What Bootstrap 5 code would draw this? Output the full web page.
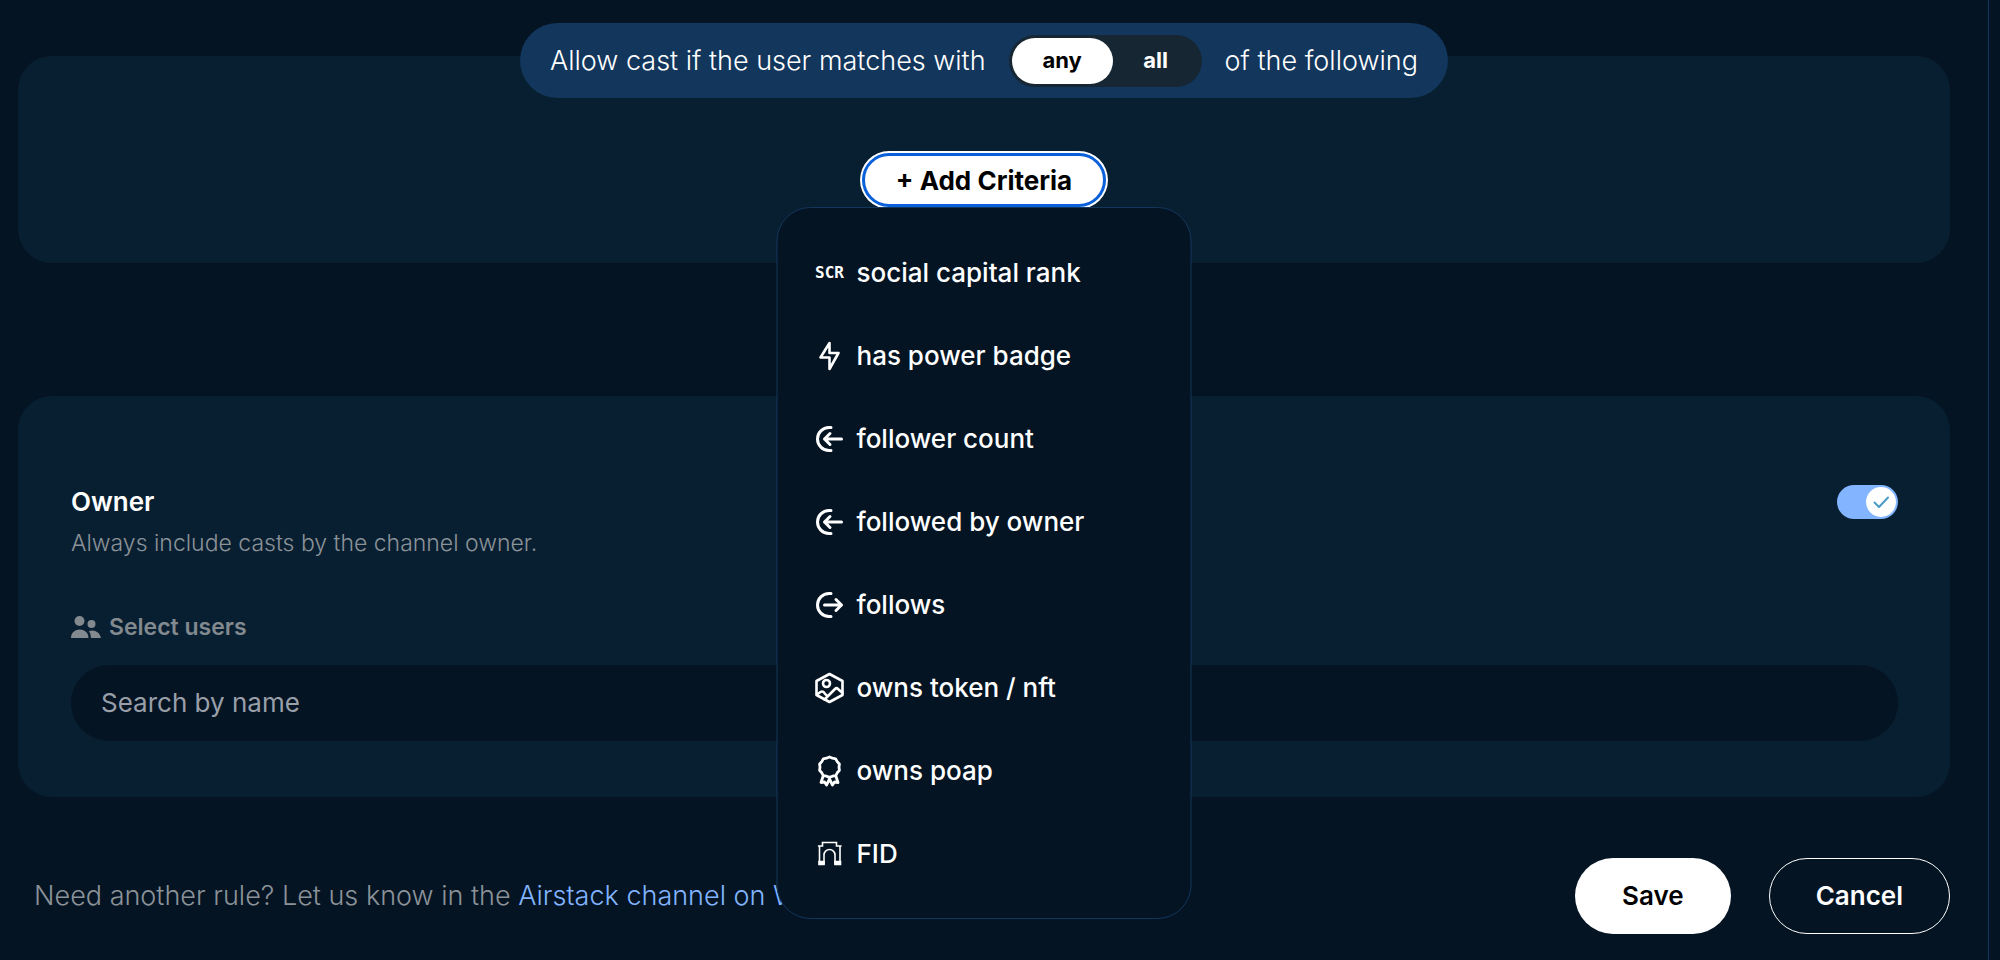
<!DOCTYPE html>
<html lang="en">
<head>
<meta charset="utf-8">
<meta name="viewport" content="width=device-width, initial-scale=1">
<title>Channel rules</title>
<link href="https://cdn.jsdelivr.net/npm/bootstrap@5.3.0/dist/css/bootstrap.min.css" rel="stylesheet">
<style>
  :root { --ink: #041423; --panel: #081f31; --edge: #12365c; --sky: #82b4ff; --muted: #8b9298; }
  body { background: var(--ink); color: #fff; font-family: Inter, "Liberation Sans", sans-serif; font-size: 27px; font-weight: 300; line-height: 36px; min-height: 100vh; }
  .page-frame { min-height: 100vh; margin-right: 11px; padding: 23px 38px 0 18px; border-right: 1px solid var(--edge); }
  .match-bar { position: relative; z-index: 1; height: 75px; padding: 0 30px; gap: 23px; margin-bottom: -42px; background: var(--edge); }
  .segments { height: 52px; padding: 3px; background: #162632; }
  .segments label { height: 46px; width: 101px; line-height: 44px; text-align: center; font-size: 22px; font-weight: 700; border-radius: 23px; cursor: pointer; }
  .segments label:last-child { width: 86px; }
  .segments .btn-check:checked + label { background: #fff; color: #000; }
  .rule-panel { background: var(--panel); border-radius: 34px; }
  .criteria-panel { height: 207px; padding-top: 97px; margin-bottom: 133px; }
  .add-btn { height: 54px; padding: 2px 31px 0; background: #fff; color: #000; border: 3px solid #0a60d8; border-radius: 27px; box-shadow: 0 0 0 2px #fff; font-size: 26px; font-weight: 700; line-height: 36px; }
  .criteria-menu { top: 100%; left: 50%; transform: translateX(-50%); width: 415px; padding: 23px 0; background: var(--ink); border: 1px solid var(--edge); border-radius: 34px; --bs-dropdown-font-size: 26px; }
  .criteria-menu .dropdown-item { height: 83px; padding: 0 37px; gap: 12px; color: #fff; font-size: 26px; font-weight: 500; background: none; }
  .criteria-menu svg { width: 30px; height: 32px; flex: none; }
  .criteria-menu svg, .stroke-icon { fill: none; stroke: currentColor; stroke-width: 3; stroke-linecap: round; stroke-linejoin: round; }
  .scr-mark { width: 30px; font: 700 16px/32px "DejaVu Sans Mono", monospace; text-align: center; }
  .owner-panel { height: 401px; padding: 88px 52px 0 53px; }
  .owner-panel h2 { font-size: 26px; line-height: 36px; font-weight: 600; margin: 0 0 5px; }
  .owner-panel p { font-size: 23px; line-height: 36px; color: var(--muted); margin: 0 0 48px; }
  .toggle-switch { appearance: none; width: 61px; height: 34px; margin: 1px 0 0; border-radius: 17px; background: #27394a; cursor: pointer; }
  .toggle-switch:checked { background: var(--sky); }
  .toggle-knob { right: 2px; top: 3px; width: 30px; height: 30px; background: #fff; border-radius: 50%; color: #4a9cc4; pointer-events: none; }
  .users-label { gap: 8px; font-size: 23px; line-height: 36px; font-weight: 600; color: #82898f; margin-bottom: 20px; }
  .search-box { height: 76px; padding: 0 30px 2px; border: 0; font-size: 26px; background: var(--ink) !important; color: #fff !important; }
  .search-box::placeholder { color: #999fa9; opacity: 1; }
  .foot-row { padding: 61px 0 0 16px; color: var(--muted); }
  .foot-row a { color: var(--sky); }
  .foot-btns { gap: 38px; }
  .foot-btn { height: 76px; font-size: 26px; font-weight: 600; border-radius: 38px; padding: 0 46px 2px; }
  .save-btn, .save-btn:hover { background: #fff; color: #000; }
  .cancel-btn, .cancel-btn:hover { border: 1px solid #fff; color: #fff; }
</style>
</head>
<body>
<main class="page-frame d-flex flex-column">
  <div class="match-bar rounded-pill d-flex align-items-center align-self-center">
    <span>Allow cast if the user matches with</span>
    <div class="segments rounded-pill d-flex" role="group" aria-label="Match mode">
      <input class="btn-check" type="radio" name="mode" id="mode-any" checked><label for="mode-any">any</label>
      <input class="btn-check" type="radio" name="mode" id="mode-all"><label for="mode-all">all</label>
    </div>
    <span>of the following</span>
  </div>

  <section class="rule-panel criteria-panel d-flex justify-content-center align-items-start">
    <div class="dropdown">
      <button class="add-btn" type="button" aria-expanded="true">+ Add Criteria</button>
      <ul class="dropdown-menu criteria-menu show">
        <li><button class="dropdown-item d-flex align-items-center" type="button"><span class="scr-mark">SCR</span>social capital rank</button></li>
        <li><button class="dropdown-item d-flex align-items-center" type="button">
          <svg viewBox="0 0 30 32" aria-hidden="true"><path stroke-width="2.600" d="M15 3 6 17.500H15V29L24 13H15Z"/></svg>has power badge</button></li>
        <li><button class="dropdown-item d-flex align-items-center" type="button">
          <svg viewBox="0 0 30 32" aria-hidden="true"><path d="M16.500 4.500H14.500A11.500 11.500 0 0 0 14.500 27.500H16.500M27 16H10M15.500 10.500 10 16l5.500 5.500"/></svg>follower count</button></li>
        <li><button class="dropdown-item d-flex align-items-center" type="button">
          <svg viewBox="0 0 30 32" aria-hidden="true"><path d="M16.500 4.500H14.500A11.500 11.500 0 0 0 14.500 27.500H16.500M27 16H10M15.500 10.500 10 16l5.500 5.500"/></svg>followed by owner</button></li>
        <li><button class="dropdown-item d-flex align-items-center" type="button">
          <svg viewBox="0 0 30 32" aria-hidden="true"><path d="M16.500 4.500H14.500A11.500 11.500 0 0 0 14.500 27.500H16.500M10 16H27M21.500 10.500 27 16l-5.500 5.500"/></svg>follows</button></li>
        <li><button class="dropdown-item d-flex align-items-center" type="button">
          <svg viewBox="0 0 30 32" aria-hidden="true"><g stroke-width="2.600"><path d="M15 2 28 9V23L15 30 2 23V9Z"/><circle cx="12" cy="11.500" r="3.500"/><path d="M10 27.500 20.500 17Q22 15.500 23.500 17L28 21M2.500 22.500 6 20Q7.500 19 9 20L12.500 24"/></g></svg>owns token / nft</button></li>
        <li><button class="dropdown-item d-flex align-items-center" type="button">
          <svg viewBox="0 0 30 32" aria-hidden="true"><g stroke-width="2.800"><path d="M15 2l3 1.200 3.200.6 1.500 2.800 2.200 2.400-.4 3.200.4 3.200-2.200 2.400-1.500 2.800-3.200.6-3 1.200-3-1.200-3.200-.6-1.500-2.800-2.200-2.400.4-3.200-.4-3.200 2.200-2.400 1.500-2.800 3.200-.6Z"/><path d="M8.500 21.500 6.500 27.500l3.500-.5 2 3L15 24l3 6 2-3 3.500.5L21.500 21.500"/></g></svg>owns poap</button></li>
        <li><button class="dropdown-item d-flex align-items-center" type="button">
          <svg viewBox="0 0 30 32" aria-hidden="true"><g stroke-width="1.600" stroke-linejoin="miter"><path d="M5 26V8H8V4.500H22V8H25.500V26M9.500 26V17a5.500 5.500 0 0 1 11 0V26M4 8H8M22 8H26.500"/><path fill="currentColor" d="M4.500 23.500H9.500V26.500H4.500ZM20.500 23.500H26V26.500H20.500Z"/></g></svg>FID</button></li>
      </ul>
    </div>
  </section>

  <section class="rule-panel owner-panel">
    <div class="d-flex justify-content-between align-items-start">
      <div>
        <h2 id="owner-title">Owner</h2>
        <p>Always include casts by the channel owner.</p>
      </div>
      <div class="position-relative d-flex">
        <input class="toggle-switch" type="checkbox" role="switch" aria-labelledby="owner-title" checked>
        <span class="toggle-knob position-absolute d-flex align-items-center justify-content-center">
          <svg class="stroke-icon" width="30" height="30" viewBox="0 0 30 30" aria-hidden="true"><path stroke-width="2" d="M8.500 15.500 13 20 22 10.500"/></svg>
        </span>
      </div>
    </div>
    <label class="users-label d-flex align-items-center" for="user-search">
      <svg width="30" height="22" viewBox="0 0 30 22" fill="currentColor" aria-hidden="true"><circle cx="8.500" cy="5" r="5"/><circle cx="20.500" cy="8" r="4"/><path d="M0 22C0 10.500 17.500 10.500 17.500 22ZM18 15C23 13 29 16 30 22H20Q20 18 18 15Z"/></svg>
      Select users
    </label>
    <input class="form-control rounded-pill search-box" id="user-search" type="text" placeholder="Search by name">
  </section>

  <footer class="foot-row d-flex align-items-center justify-content-between">
    <span>Need another rule? Let us know in the <a class="text-decoration-none" href="#">Airstack channel on Warpcast</a></span>
    <div class="foot-btns d-flex">
      <button class="btn foot-btn save-btn" type="button">Save</button>
      <button class="btn foot-btn cancel-btn" type="button">Cancel</button>
    </div>
  </footer>
</main>
<script src="https://cdn.jsdelivr.net/npm/bootstrap@5.3.0/dist/js/bootstrap.bundle.min.js"></script>
</body>
</html>
